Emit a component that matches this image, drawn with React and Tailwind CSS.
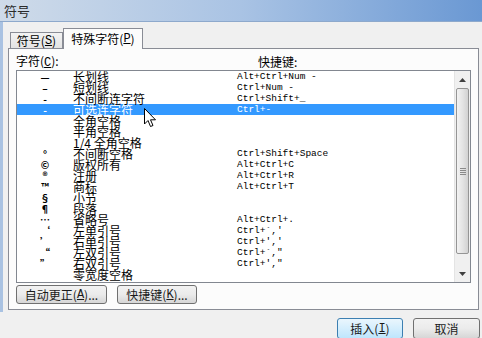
import React from 'react';

// Word's "符号" dialog, 特殊字符 tab, as a static Win7-style mock.
const CJK = { fontFamily: '"Noto Sans CJK SC", "Noto Sans", sans-serif' };
const MONO = { fontFamily: '"Liberation Mono", "DejaVu Sans Mono", monospace' };

const ROWS = [
  ['—', '长划线', 'Alt+Ctrl+Num -'],
  ['–', '短划线', 'Ctrl+Num -'],
  ['-', '不间断连字符', 'Ctrl+Shift+_'],
  ['-', '可选连字符', 'Ctrl+-'],
  ['', '全角空格', ''],
  ['', '半角空格', ''],
  ['', '1/4 全角空格', ''],
  ['°', '不间断空格', 'Ctrl+Shift+Space'],
  ['©', '版权所有', 'Alt+Ctrl+C'],
  ['®', '注册', 'Alt+Ctrl+R'],
  ['™', '商标', 'Alt+Ctrl+T'],
  ['§', '小节', ''],
  ['¶', '段落', ''],
  ['…', '省略号', 'Alt+Ctrl+.'],
  ['‘', '左单引号', "Ctrl+`,'"],
  ['’', '右单引号', "Ctrl+','"],
  ['“', '左双引号', 'Ctrl+`,"'],
  ['”', '右双引号', "Ctrl+',\""],
  ['', '零宽度空格', ''],
];
const SELECTED = 3;

function Key({ children }) {
  return <span className="underline" style={MONO}>{children}</span>;
}

function Btn({ children, className = '', primary = false }) {
  return (
    <div
      className={`flex items-center justify-center rounded-[3px] border text-[12px] text-[#1a1a1a] ${
        primary
          ? 'border-[#3c7fb1] bg-gradient-to-b from-[#eaf6fd] to-[#bee6fd]'
          : 'border-[#707070] bg-gradient-to-b from-[#f2f2f2] via-[#ebebeb] to-[#d6d6d6]'
      } ${className}`}
      style={CJK}
    >
      {children}
    </div>
  );
}

function Cursor() {
  return (
    <svg className="absolute left-[144px] top-[108px]" width="13" height="20" viewBox="0 0 13 20">
      <path d="M0.5 0.5 L0.5 16 L4 12.5 L6.5 18.5 L9 17.5 L6.5 11.8 L11.5 11.8 Z" fill="#fff" stroke="#000" strokeWidth="1" />
    </svg>
  );
}

export default function App() {
  return (
    <div className="relative w-[482px] h-[338px] overflow-hidden bg-[#f0f0f0] text-black" style={CJK}>
      {/* title bar */}
      <div className="h-[22px] flex items-center pl-[4px] bg-gradient-to-r from-[#cfdbe9] via-[#a9c3e4] to-[#6a98d3] border-b border-[#8ea9cc]">
        <span className="text-[13px] leading-none text-[#2a2a2a]">符号</span>
      </div>

      <div className="flex">
        <div className="w-[3px] h-[290px] bg-[#a9c2e2]" />
        <div className="flex-1">
          {/* tabs */}
          <div className="h-[26px] flex items-end pl-[7px]">
            <div className="h-[16px] w-[53px] flex items-center justify-center border border-b-0 border-[#898c95] bg-gradient-to-b from-[#f3f3f3] to-[#e3e3e3] text-[12px] leading-none">
              符号(<Key>S</Key>)
            </div>
            <div className="relative -mb-px h-[21px] w-[80px] flex items-center justify-center border border-b-0 border-[#898c95] bg-[#fcfcfc] text-[12px] leading-none z-10">
              特殊字符(<Key>P</Key>)
            </div>
          </div>

          {/* tab panel */}
          <div className="ml-[5px] w-[471px] h-[262px] border border-[#898c95] bg-[#fcfcfc] pl-[7px] pt-[6px]">
            <div className="flex h-[14px] items-center text-[12px] leading-none">
              <span className="w-[242px]">字符(<Key>C</Key>):</span>
              <span>快捷键:</span>
            </div>
            <div className="mt-[1px] w-[455px] h-[213px] border border-[#828790] bg-white flex">
              <div className="flex-1">
                {ROWS.map(([sym, name, key], i) => (
                  <div
                    key={name}
                    className={`flex h-[11px] items-center text-[12px] leading-[11px] ${
                      i === SELECTED ? 'bg-[#3399ff] text-white' : 'text-black'
                    }`}
                  >
                    <span className="w-[56px] text-center text-[10px] font-bold">{sym}</span>
                    <span className="w-[164px] whitespace-nowrap">{name}</span>
                    <span className="text-[9.5px] whitespace-pre" style={MONO}>{key}</span>
                  </div>
                ))}
              </div>
              {/* scrollbar */}
              <div className="w-[16px] bg-[#f0f0f0] border-l border-[#e4e4e4] flex flex-col items-center">
                <div className="h-[17px] flex items-center justify-center">
                  <svg width="7" height="4" viewBox="0 0 7 4"><path d="M0 4 L3.5 0 L7 4 Z" fill="#404040" /></svg>
                </div>
                <div className="w-[13px] h-[166px] rounded-[2px] border border-[#959595] bg-gradient-to-r from-[#f3f3f3] via-[#e4e4e4] to-[#d2d2d2] flex flex-col items-center justify-center gap-[1px]">
                  <div className="w-[6px] h-px bg-[#8a8a8a]" />
                  <div className="w-[6px] h-px bg-[#8a8a8a]" />
                  <div className="w-[6px] h-px bg-[#8a8a8a]" />
                  <div className="w-[6px] h-px bg-[#8a8a8a]" />
                </div>
                <div className="flex-1" />
                <div className="h-[17px] flex items-center justify-center">
                  <svg width="7" height="4" viewBox="0 0 7 4"><path d="M0 0 L3.5 4 L7 0 Z" fill="#404040" /></svg>
                </div>
              </div>
            </div>
            <div className="mt-[2px] flex gap-[10px]">
              <Btn className="w-[91px] h-[19px]">自动更正(<Key>A</Key>)...</Btn>
              <Btn className="w-[80px] h-[19px]">快捷键(<Key>K</Key>)...</Btn>
            </div>
          </div>
        </div>
      </div>

      {/* dialog buttons */}
      <div className="flex justify-end gap-[10px] pr-[2px] pt-[6px]">
        <Btn primary className="w-[66px] h-[21px]">插入(<Key>I</Key>)</Btn>
        <Btn className="w-[67px] h-[21px]">取消</Btn>
      </div>

      <Cursor />
    </div>
  );
}
